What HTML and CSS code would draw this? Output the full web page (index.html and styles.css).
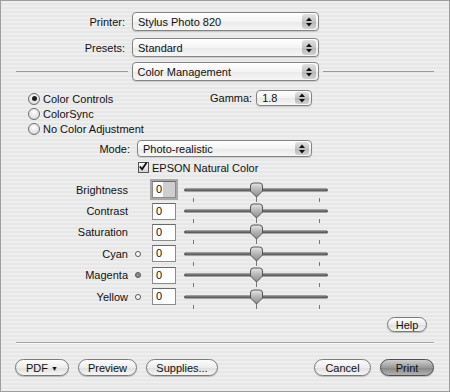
FILE: index.html
```html
<!DOCTYPE html>
<html lang="en">
<head>
    <meta charset="UTF-8">
    <title>Print</title>
    <link rel="stylesheet" href="styles.css">
</head>
<body>
    <svg class="defs" width="0" height="0">
        <symbol id="arrows" viewBox="0 0 6 10">
            <polygon points="0,4 3,0.5 6,4" fill="#111"/>
            <polygon points="0,6 6,6 3,9.5" fill="#111"/>
        </symbol>
        <linearGradient id="thumbFill" x1="0" y1="0" x2="0" y2="1">
            <stop offset="0" stop-color="#e6e6e6"/>
            <stop offset="0.5" stop-color="#b4b4b4"/>
            <stop offset="1" stop-color="#8c8c8c"/>
        </linearGradient>
        <symbol id="slider" viewBox="0 0 146 24">
            <line x1="2.5" y1="11" x2="143.5" y2="11" stroke="#5e5e5e" stroke-width="3" stroke-linecap="round"/>
            <line x1="3" y1="10.2" x2="143" y2="10.2" stroke="#8a8a8a" stroke-width="0.8"/>
            <line x1="10.5" y1="19" x2="10.5" y2="23" stroke="#777" stroke-width="1"/>
            <line x1="136.5" y1="19" x2="136.5" y2="23" stroke="#777" stroke-width="1"/>
            <line x1="73.5" y1="16" x2="73.5" y2="23" stroke="#777" stroke-width="1"/>
            <path d="M67.5 7 Q67.5 4 70.5 4 H76.5 Q79.5 4 79.5 7 V12 L73.5 18 L67.5 12 Z" fill="url(#thumbFill)" stroke="#555" stroke-width="1"/>
        </symbol>
    </svg>

    <div class="dialog">
        <div class="form-row">
            <span class="row-label">Printer:</span>
            <div class="popup popup-wide">
                <span class="popup-text">Stylus Photo 820</span>
                <span class="stepper"><svg width="6" height="10"><use href="#arrows"/></svg></span>
            </div>
        </div>
        <div class="form-row presets-row">
            <span class="row-label">Presets:</span>
            <div class="popup popup-wide">
                <span class="popup-text">Standard</span>
                <span class="stepper"><svg width="6" height="10"><use href="#arrows"/></svg></span>
            </div>
        </div>
        <div class="pane-row">
            <span class="pane-line"></span>
            <div class="popup popup-wide">
                <span class="popup-text">Color Management</span>
                <span class="stepper"><svg width="6" height="10"><use href="#arrows"/></svg></span>
            </div>
            <span class="pane-line"></span>
        </div>

        <div class="color-section">
            <div class="radio-list">
                <div class="radio-row"><span class="radio checked"></span>Color Controls</div>
                <div class="radio-row"><span class="radio"></span>ColorSync</div>
                <div class="radio-row"><span class="radio"></span>No Color Adjustment</div>
            </div>
            <div class="gamma">
                <span>Gamma:</span>
                <div class="popup popup-small">
                    <span class="popup-text">1.8</span>
                    <span class="stepper"><svg width="6" height="10"><use href="#arrows"/></svg></span>
                </div>
            </div>
        </div>

        <div class="mode-row">
            <span class="mode-label">Mode:</span>
            <div class="popup popup-mode">
                <span class="popup-text">Photo-realistic</span>
                <span class="stepper"><svg width="6" height="10"><use href="#arrows"/></svg></span>
            </div>
        </div>
        <div class="check-row">
            <span class="checkbox">
                <svg width="11" height="11" viewBox="0 0 11 11"><path d="M2 5.5 L4.5 8.5 L9.5 1" fill="none" stroke="#111" stroke-width="2"/></svg>
            </span>
            EPSON Natural Color
        </div>

        <div class="sliders">
            <div class="slider-row">
                <span class="slider-label">Brightness</span>
                <span class="swatch-slot"></span>
                <span class="field focused">0</span>
                <svg class="slider" width="146" height="24"><use href="#slider"/></svg>
            </div>
            <div class="slider-row">
                <span class="slider-label">Contrast</span>
                <span class="swatch-slot"></span>
                <span class="field">0</span>
                <svg class="slider" width="146" height="24"><use href="#slider"/></svg>
            </div>
            <div class="slider-row">
                <span class="slider-label">Saturation</span>
                <span class="swatch-slot"></span>
                <span class="field">0</span>
                <svg class="slider" width="146" height="24"><use href="#slider"/></svg>
            </div>
            <div class="slider-row">
                <span class="slider-label">Cyan</span>
                <span class="swatch-slot"><span class="swatch"></span></span>
                <span class="field">0</span>
                <svg class="slider" width="146" height="24"><use href="#slider"/></svg>
            </div>
            <div class="slider-row">
                <span class="slider-label">Magenta</span>
                <span class="swatch-slot"><span class="swatch filled"></span></span>
                <span class="field">0</span>
                <svg class="slider" width="146" height="24"><use href="#slider"/></svg>
            </div>
            <div class="slider-row">
                <span class="slider-label">Yellow</span>
                <span class="swatch-slot"><span class="swatch"></span></span>
                <span class="field">0</span>
                <svg class="slider" width="146" height="24"><use href="#slider"/></svg>
            </div>
        </div>

        <div class="help-row">
            <button class="btn btn-help">Help</button>
        </div>

        <div class="separator"></div>

        <div class="button-bar">
            <button class="btn btn-pdf">PDF <span class="pdf-arrow">&#9660;</span></button>
            <button class="btn btn-preview">Preview</button>
            <button class="btn btn-supplies">Supplies...</button>
            <span class="spacer"></span>
            <button class="btn btn-cancel">Cancel</button>
            <button class="btn btn-print">Print</button>
        </div>
    </div>
</body>
</html>
```

FILE: styles.css
```css
* {
    margin: 0;
    padding: 0;
    box-sizing: border-box;
}

body {
    background: #ececec;
    font-family: "Liberation Sans", Arial, sans-serif;
    font-size: 11px;
    color: #111;
}

.defs {
    position: absolute;
    width: 0;
    height: 0;
}

.dialog {
    width: 450px;
    height: 392px;
    border: 1px solid #9e9e9e;
    background: repeating-linear-gradient(to bottom, #eeeeee 0, #eeeeee 2px, #e7e7e7 2px, #e7e7e7 4px);
    padding: 11px 15px 0 15px;
}

/* popups */

.popup {
    display: flex;
    align-items: center;
    border: 1px solid #848484;
    border-radius: 4px;
    background: linear-gradient(#ffffff, #f4f4f4 50%, #e9e9e9 51%, #f7f7f7);
    box-shadow: 0 1px 1px rgba(0, 0, 0, 0.15);
    padding: 0 2px 0 5px;
}

.popup-text {
    flex: 1;
    white-space: nowrap;
}

.stepper {
    width: 14px;
    height: calc(100% - 2px);
    display: flex;
    align-items: center;
    justify-content: center;
    border-radius: 3px;
    background: linear-gradient(#e2e2e2, #c4c4c4 50%, #b5b5b5 51%, #d2d2d2);
}

.popup-wide {
    width: 187px;
    height: 19px;
}

.popup-small {
    width: 56px;
    height: 16px;
}

.popup-mode {
    width: 175px;
    height: 17px;
}

/* top rows */

.form-row {
    display: flex;
    align-items: center;
    gap: 7px;
}

.presets-row {
    margin-top: 7px;
}

.row-label {
    width: 109px;
    text-align: right;
}

.pane-row {
    display: flex;
    align-items: center;
    margin-top: 5px;
}

.pane-line {
    flex: 1;
    height: 1px;
    background: #9a9a9a;
}

.pane-row .popup {
    margin: 0 4px;
}

/* color options */

.color-section {
    display: flex;
    margin-top: 10px;
    padding-left: 12px;
}

.radio-list {
    width: 182px;
}

.radio-row {
    display: flex;
    align-items: center;
    height: 15px;
}

.radio {
    width: 12px;
    height: 12px;
    border-radius: 50%;
    border: 1px solid #6e6e6e;
    background: radial-gradient(circle at 50% 35%, #ffffff, #dedede 70%, #c4c4c4);
    margin-right: 3px;
    display: flex;
    align-items: center;
    justify-content: center;
}

.radio.checked::after {
    content: "";
    width: 5px;
    height: 5px;
    border-radius: 50%;
    background: #1d1d1d;
}

.gamma {
    display: flex;
    align-items: center;
    gap: 4px;
    margin-top: -1px;
    height: 16px;
}

.mode-row {
    display: flex;
    align-items: center;
    gap: 7px;
    margin-top: 4px;
}

.mode-label {
    width: 114px;
    text-align: right;
}

.check-row {
    display: flex;
    align-items: center;
    height: 13px;
    margin-top: 4px;
    padding-left: 122px;
}

.checkbox {
    width: 11px;
    height: 11px;
    border: 1px solid #555;
    background: linear-gradient(#ffffff, #d4d4d4);
    margin-right: 3px;
    display: flex;
}

.checkbox svg {
    margin: -2px 0 0 -1px;
}

/* sliders */

.sliders {
    margin-top: 5px;
}

.slider-row {
    display: flex;
    align-items: center;
    height: 21.4px;
}

.slider-label {
    width: 112px;
    text-align: right;
}

.swatch-slot {
    width: 24px;
    display: flex;
    padding-left: 7px;
}

.swatch {
    width: 6px;
    height: 6px;
    border-radius: 50%;
    border: 1px solid #555;
    background: #fff;
}

.swatch.filled {
    background: #8c8c8c;
}

.field {
    width: 24px;
    height: 17px;
    border: 1px solid #8c8c8c;
    border-top-color: #6a6a6a;
    background: #fff;
    padding-left: 3px;
    line-height: 15px;
}

.field.focused {
    box-shadow: 0 0 0 2px #a9a9a9;
    background: linear-gradient(to right, #fff 0, #fff 10px, #cfcfcf 10px);
}

.slider {
    margin-left: 7px;
    margin-top: 2px;
    overflow: visible;
}

/* buttons */

.help-row {
    display: flex;
    justify-content: flex-end;
    margin-top: 10px;
    padding-right: 7px;
}

.btn {
    font-family: inherit;
    font-size: 11px;
    color: #111;
    height: 16px;
    border: 1px solid #7a7a7a;
    border-radius: 9px;
    background: linear-gradient(#fdfdfd, #ececec 50%, #dedede 51%, #f6f6f6);
    box-shadow: 0 1px 1px rgba(0, 0, 0, 0.2);
}

.btn-help {
    width: 40px;
    height: 15px;
}

.separator {
    margin-top: 10px;
    height: 2px;
    border-top: 1px solid #a2a2a2;
    border-bottom: 1px solid #fafafa;
}

.button-bar {
    display: flex;
    align-items: center;
    margin-top: 15px;
    margin-left: -1px;
    gap: 9px;
}

.button-bar .btn {
    height: 17px;
}

.btn-pdf {
    width: 54px;
}

.pdf-arrow {
    font-size: 7px;
    vertical-align: 1px;
}

.btn-preview {
    width: 59px;
}

.btn-supplies {
    width: 72px;
}

.spacer {
    flex: 1;
}

.btn-cancel {
    width: 57px;
}

.btn-print {
    width: 54px;
    border-color: #4e4e4e;
    background: linear-gradient(#cfcfcf, #9a9a9a 50%, #858585 51%, #b2b2b2);
}
```
